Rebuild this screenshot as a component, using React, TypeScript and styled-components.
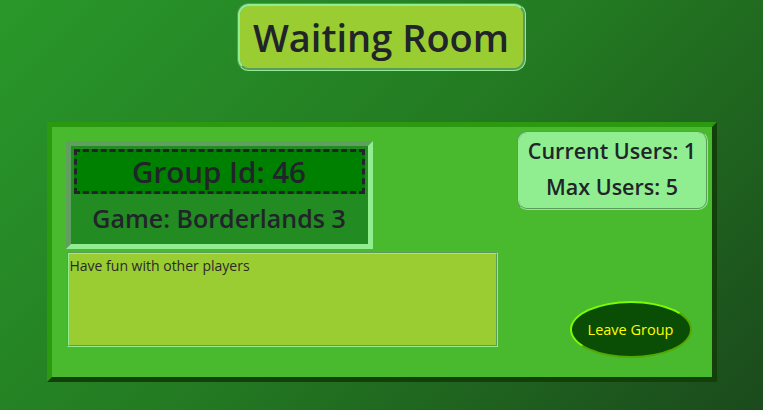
import React from "react";
import styled, { createGlobalStyle } from "styled-components";

const Global = createGlobalStyle`
  html, body { margin: 0; padding: 0; }
  body {
    font-family: "Open Sans", "Noto Sans", sans-serif;
    color: #212529;
  }
`;

const Page = styled.div`
  min-height: 410px;
  box-sizing: border-box;
  background: linear-gradient(135deg, #29982a 0%, #237a22 50%, #1b4a1c 100%);
  display: flex;
  flex-direction: column;
  align-items: center;
  padding-top: 3px;
`;

const Title = styled.h1`
  margin: 0;
  font-size: 38px;
  font-weight: 600;
  line-height: 62px;
  padding: 0 14px 0 13px;
  background: #9acd32;
  border: 3px groove #90ee90;
  border-radius: 12px;
  color: #212529;
`;

const Panel = styled.div`
  margin-top: 51px;
  width: 670px;
  height: 260px;
  box-sizing: border-box;
  background: #49b92e;
  border: 5px solid;
  border-color: #2c9a10 #123f0a #123f0a #2c9a10;
  display: flex;
  justify-content: space-between;
`;

const LeftCol = styled.div`
  padding: 14px 0 0 14px;
  display: flex;
  flex-direction: column;
  gap: 3px;
`;

const GroupBox = styled.div`
  width: 307px;
  height: 108px;
  box-sizing: border-box;
  background: #228b22;
  border: 5px solid;
  border-color: #609f60 #90ee90 #90ee90 #609f60;
  padding: 3px;
  display: flex;
  flex-direction: column;
`;

const GroupId = styled.h2`
  margin: 0;
  height: 45px;
  box-sizing: border-box;
  border: 3px dashed #212529;
  background: #008000;
  font-size: 29.5px;
  font-weight: 600;
  line-height: 39px;
  text-align: center;
`;

const Game = styled.h3`
  margin: 0;
  flex: 1;
  display: flex;
  align-items: center;
  justify-content: center;
  font-size: 25px;
  font-weight: 600;
`;

const Description = styled.textarea`
  width: 431px;
  height: 95px;
  margin-left: 1px;
  box-sizing: border-box;
  background: #9acd32;
  border: 2px groove #90ee90;
  padding: 2px 1px;
  font-family: "Open Sans", "Noto Sans", sans-serif;
  font-size: 14px;
  color: #2a2a2a;
  resize: none;
  outline: none;
`;

const RightCol = styled.div`
  padding: 4px 4px 19px 0;
  display: flex;
  flex-direction: column;
  align-items: flex-end;
  justify-content: space-between;
`;

const UsersBox = styled.div`
  width: 191px;
  height: 79px;
  box-sizing: border-box;
  background: #90ee90;
  border: 2px groove #90ee90;
  border-radius: 10px;
  padding-top: 1px;
  display: flex;
  flex-direction: column;
  gap: 2px;
`;

const UsersLine = styled.p`
  margin: 0;
  font-size: 21.5px;
  font-weight: 600;
  line-height: 34px;
  text-align: center;
  white-space: nowrap;
`;

const LeaveButton = styled.button`
  width: 122px;
  height: 57px;
  margin-right: 16px;
  box-sizing: border-box;
  border-radius: 50%;
  background: #0a4d05;
  border: 2px outset #7cfc00;
  color: #ffff00;
  font-family: "Open Sans", "Noto Sans", sans-serif;
  font-size: 14.5px;
  cursor: pointer;
`;

export default function App() {
  return (
    <>
      <Global />
      <Page>
        <Title>Waiting Room</Title>
        <Panel>
          <LeftCol>
            <GroupBox>
              <GroupId>Group Id: 46</GroupId>
              <Game>Game: Borderlands 3</Game>
            </GroupBox>
            <Description readOnly defaultValue="Have fun with other players" />
          </LeftCol>
          <RightCol>
            <UsersBox>
              <UsersLine>Current Users: 1</UsersLine>
              <UsersLine>Max Users: 5</UsersLine>
            </UsersBox>
            <LeaveButton>Leave Group</LeaveButton>
          </RightCol>
        </Panel>
      </Page>
    </>
  );
}
